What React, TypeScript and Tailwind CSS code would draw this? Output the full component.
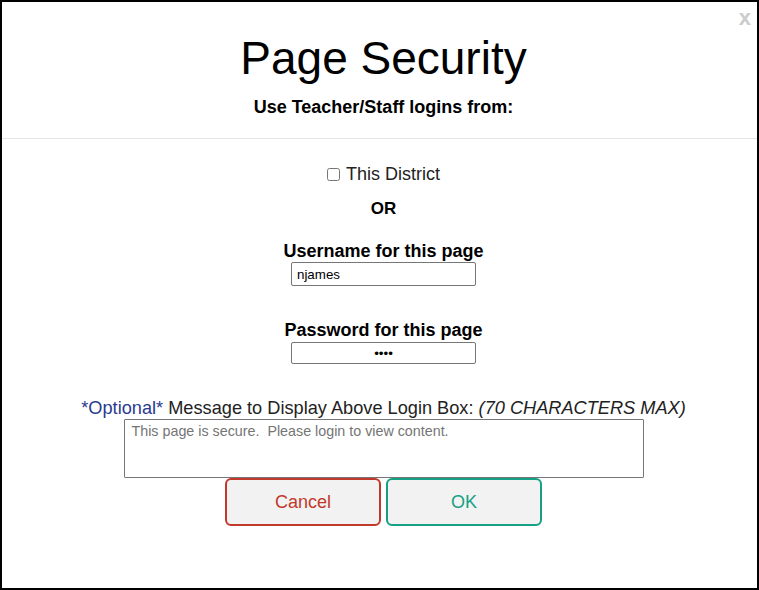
import React from "react";

export default function App() {
  return (
    <div className="relative w-[759px] h-[590px] bg-white border-2 border-black font-['Liberation_Sans',Arial,sans-serif] text-[#111]">
      {/* Close */}
      <span className="absolute top-[5px] right-[6px] text-[22px] leading-none font-bold text-[#cccccc] select-none">
        x
      </span>

      {/* Header */}
      <div className="pt-[33px] pb-[21px] pl-[8px] border-b border-[#e5e5e5] flex flex-col items-center">
        <h1 className="text-[46px] leading-none text-black">Page Security</h1>
        <p className="mt-[16px] text-[18px] leading-[20px] font-bold text-black">Use Teacher/Staff logins from:</p>
      </div>

      {/* Body */}
      <div className="pt-[25px] pl-[8px] flex flex-col items-center">
        <label className="flex items-center gap-[6px] text-[18px] leading-[20px] text-[#222]">
          <input type="checkbox" className="m-0 w-[13px] h-[13px]" />
          This District
        </label>

        <p className="mt-[15px] text-[17px] leading-[20px] font-bold text-black">OR</p>

        <p className="mt-[22px] text-[18px] leading-[20px] font-bold text-black">Username for this page</p>
        <input
          type="text"
          defaultValue="njames"
          className="mt-[1px] w-[185px] h-[24px] px-[5px] text-[13.33px] text-black border border-[#767676] rounded-[2px] outline-none"
        />

        <p className="mt-[34px] text-[18px] leading-[20px] font-bold text-black">Password for this page</p>
        <input
          type="password"
          defaultValue="abcd"
          className="mt-[2px] w-[185px] h-[22px] px-[5px] text-[13.33px] text-center text-black border border-[#767676] rounded-[2px] outline-none"
        />

        <p className="mt-[34px] text-[18.2px] leading-[20px] text-[#222] whitespace-nowrap">
          <span className="text-[#2a3a8f]">*Optional*</span> Message to Display Above Login Box:{" "}
          <i>(70 CHARACTERS MAX)</i>
        </p>
        <textarea
          placeholder="This page is secure.  Please login to view content."
          className="mt-[1px] w-[520px] h-[59px] px-[7px] py-[3px] text-[14.3px] leading-[16px] resize-none border border-[#767676] rounded-[1px] outline-none placeholder:text-[#757575]"
        />

        <div className="flex gap-[5px]">
          <button className="w-[156px] h-[48px] rounded-[6px] border-2 border-[#c0392b] bg-[#f2f2f2] text-[18px] text-[#c0392b]">
            Cancel
          </button>
          <button className="w-[156px] h-[48px] rounded-[6px] border-2 border-[#16a085] bg-[#f2f2f2] text-[18px] text-[#16a085]">
            OK
          </button>
        </div>
      </div>
    </div>
  );
}
